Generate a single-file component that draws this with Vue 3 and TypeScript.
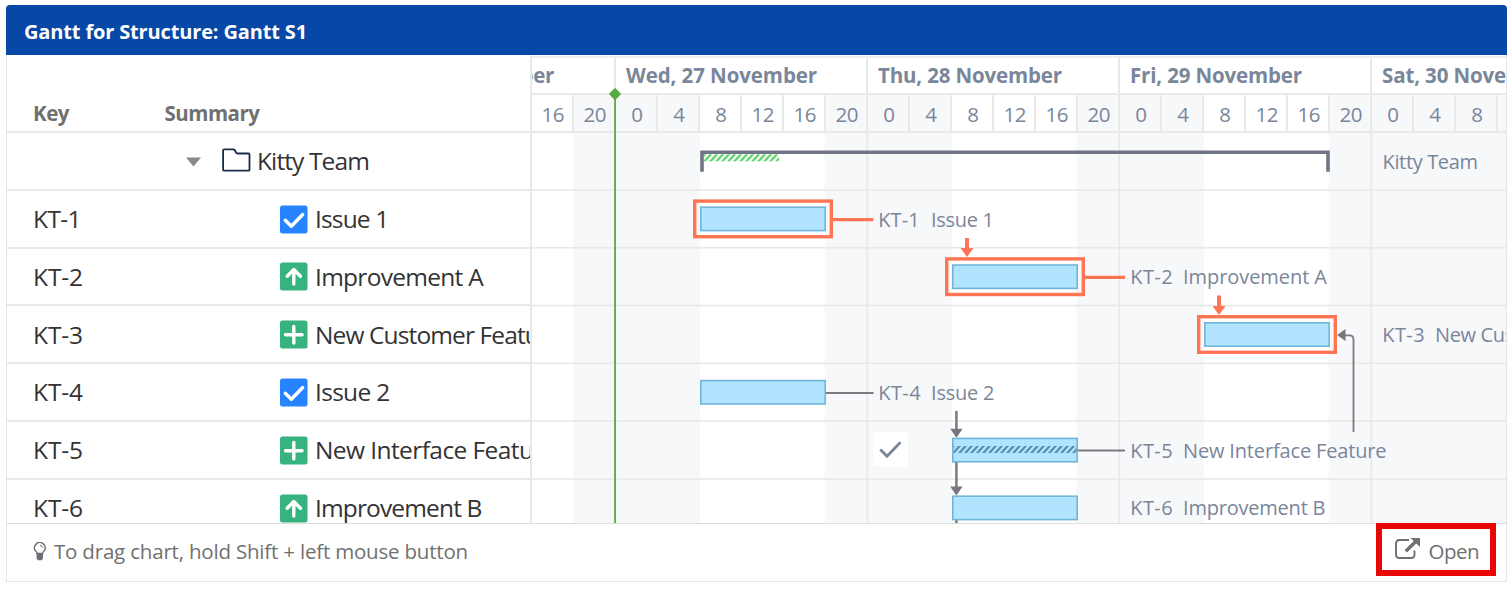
<script setup lang="ts">
interface Row {
  key: string
  summary: string
  width: number
  kind: 'folder' | 'task' | 'up' | 'plus'
}
interface Label {
  x: number
  y: number
  text: string
  width: number
}

// Spreads the letters so that a label takes exactly the given width
const vFit = {
  mounted(el: HTMLElement, binding: { value: number }) {
    const natural = el.getBoundingClientRect().width
    const count = (el.textContent ?? '').trim().length
    el.style.letterSpacing = `${(binding.value - natural) / count}px`
  },
}

const rows: Row[] = [
  { key: '', summary: 'Kitty Team', width: 112, kind: 'folder' },
  { key: 'KT-1', summary: 'Issue 1', width: 73.5, kind: 'task' },
  { key: 'KT-2', summary: 'Improvement A', width: 168, kind: 'up' },
  { key: 'KT-3', summary: 'New Customer Feature', width: 246, kind: 'plus' },
  { key: 'KT-4', summary: 'Issue 2', width: 74.5, kind: 'task' },
  { key: 'KT-5', summary: 'New Interface Feature', width: 241, kind: 'plus' },
  { key: 'KT-6', summary: 'Improvement B', width: 166.5, kind: 'up' },
]

const days = [
  { text: 'Tue, 26 November', width: 180 },
  { text: 'Wed, 27 November', width: 191 },
  { text: 'Thu, 28 November', width: 184 },
  { text: 'Fri, 29 November', width: 172 },
  { text: 'Sat, 30 November', width: 178 },
]
const hours: number[] = [16, 20, 0, 4, 8, 12, 16, 20, 0, 4, 8, 12, 16, 20, 0, 4, 8, 12, 16, 20, 0, 4, 8, 12]
const isOff = (i: number) => i >= 20 || [20, 0, 4].includes(hours[i])

// Chart coordinates: origin at the top left corner of the rows area
const work = [
  { x: 0, w: 41 },
  { x: 168, w: 124.7 },
  { x: 420, w: 124.7 },
  { x: 672, w: 124.7 },
]
const rowLines = [57, 114.8, 172.6, 230.4, 288.2, 346]
const dayLines = [83.2, 335.2, 587.2, 839.2]
const bars = [
  { x: 168, y: 73.4, hot: true },
  { x: 420, y: 131.2, hot: true },
  { x: 672, y: 189, hot: true },
  { x: 168, y: 246.8, hot: false },
  { x: 420, y: 304.6, hot: false },
  { x: 420, y: 362.4, hot: false },
]
const labels: Label[] = [
  { x: 850.5, y: 36, text: 'Kitty Team', width: 95.5 },
  { x: 346.2, y: 93.8, text: 'KT-1', width: 41.5 },
  { x: 399, y: 93.8, text: 'Issue 1', width: 63 },
  { x: 598.2, y: 151.3, text: 'KT-2', width: 42.5 },
  { x: 651, y: 151.3, text: 'Improvement A', width: 144 },
  { x: 850.2, y: 209, text: 'KT-3', width: 42.5 },
  { x: 903, y: 209, text: 'New Customer Feature', width: 208 },
  { x: 346.2, y: 267, text: 'KT-4', width: 42.5 },
  { x: 399, y: 267, text: 'Issue 2', width: 63.5 },
  { x: 598.2, y: 325, text: 'KT-5', width: 42.5 },
  { x: 651, y: 325, text: 'New Interface Feature', width: 203.5 },
  { x: 598.2, y: 382, text: 'KT-6', width: 42.5 },
  { x: 651, y: 382, text: 'Improvement B', width: 142.5 },
]
</script>

<template>
  <div class="page">
    <section class="gadget">
      <header class="title"><span v-fit="283">Gantt for Structure: Gantt S1</span></header>
      <div class="body">
        <div class="table">
          <div class="thead">
            <span class="kcol"><span v-fit="36" class="fit">Key</span></span>
            <span v-fit="95" class="fit">Summary</span>
          </div>
          <div class="rows">
            <div v-for="(r, i) in rows" :key="i" class="row">
              <span class="kcol"><span v-if="r.key" v-fit="r.key === 'KT-1' ? 48 : 50" class="fit">{{ r.key }}</span></span>
              <span class="icon" :class="{ folder: r.kind === 'folder' }">
                <svg v-if="r.kind === 'folder'" width="66" height="28" viewBox="0 0 66 28">
                  <path d="M0 10.500h15l-7.500 9z" fill="#8a8a8a" />
                  <path d="M38.100 2.300h9.200q1 0 1.500.900l1.400 2.500q.400.800 1.300.800h11q1 0 1 1v15.200q0 1-1 1h-24.400q-1 0-1-1v-19.400q0-1 1-1z" fill="none" stroke="#172b4d" stroke-width="1.800" />
                </svg>
                <svg v-else width="28" height="29" viewBox="0 0 28 29">
                  <rect x="0" y=".6" width="27.500" height="28" rx="2.500" :fill="r.kind === 'task' ? '#2684ff' : '#36b37e'" />
                  <g fill="none" stroke="#fff" stroke-width="3.400" stroke-linecap="round" stroke-linejoin="round">
                    <path v-if="r.kind === 'task'" d="M5.300 15.300l6 5.900L22.700 9.500" />
                    <path v-if="r.kind === 'up'" d="M13.800 22V8M7.200 14.200l6.600-6.700 6.600 6.700" />
                    <path v-if="r.kind === 'plus'" d="M13.800 6.400v16.600M5.500 14.700h16.600" />
                  </g>
                </svg>
              </span>
              <span v-fit="r.width" class="fit">{{ r.summary }}</span>
            </div>
          </div>
        </div>
        <div class="chart">
          <div class="days">
            <div v-for="d in days" :key="d.text" class="day"><span v-fit="d.width" class="fit">{{ d.text }}</span></div>
          </div>
          <div class="hours">
            <div v-for="(h, i) in hours" :key="i" class="hour" :class="{ off: isOff(i) }">{{ h }}</div>
          </div>
          <svg class="plot" width="974" height="390" viewBox="0 0 974 390">
            <defs>
              <pattern id="done" width="6" height="7" patternUnits="userSpaceOnUse" x="172.500" y="21.500">
                <path d="M-1 8L7-1M-7 8L1-1M5 8L13-1" stroke="#4bcb5c" stroke-width="2" />
              </pattern>
              <pattern id="spent" width="6" height="7" patternUnits="userSpaceOnUse" x="421.500" y="313">
                <path d="M-1 8L7-1M-7 8L1-1M5 8L13-1" stroke="#3d789b" stroke-width="1.700" />
              </pattern>
            </defs>
            <rect width="974" height="390" fill="#f7f8fa" />
            <rect v-for="w in work" :key="w.x" :x="w.x" y="0" :width="w.w" height="390" fill="#fff" />
            <rect v-for="y in rowLines" :key="y" x="0" :y="y - .9" width="974" height="1.700" fill="#e9e9ea" />
            <rect v-for="x in dayLines" :key="x" :x="x - .7" y="0" width="1.700" height="390" fill="#e8e8e9" />

            <path d="M170 38.700V19.300H796V38.700" fill="none" stroke="#6f7587" stroke-width="3.600" />
            <rect x="172" y="21.300" width="75" height="7" fill="url(#done)" />

            <g fill="none" stroke="#7a7b80" stroke-width="2">
              <path d="M294 260H341.500M546 317.600H593" />
              <path d="M813 202.300h4.500q4 0 4 4V299" stroke-width="1.800" />
              <path d="M424.400 278V298M424.400 320V355M424.400 386V390" stroke-width="2.500" />
            </g>
            <path d="M805 202l8.500-6v12z" fill="#77787d" />
            <g fill="none" stroke="#ff7452" stroke-width="3.400">
              <path d="M301 86.600H341.300M553 144.400H593" />
              <path d="M435 105V117M687 162.500V174.500" stroke-width="4" />
            </g>
            <path d="M428.500 115h13l-6.500 9zM680.500 173h13l-6.500 9z" fill="#ff7452" />

            <template v-for="(b, i) in bars" :key="i">
              <rect v-if="b.hot" :x="b.x - 5.300" :y="b.y - 5.300" width="136.600" height="35.600" fill="none" stroke="#ff7452" stroke-width="3.400" />
              <rect :x="b.x + .8" :y="b.y + .8" width="124.400" height="23.400" fill="#b0e4ff" stroke="#71b6da" stroke-width="1.600" />
            </template>
            <rect x="421.500" y="313" width="123" height="7" fill="url(#spent)" />
            <path d="M418.200 295.700h12.400l-6.200 9zM418.200 353.500h12.400l-6.200 9z" fill="#77787d" />

            <rect x="341" y="299" width="35" height="35" rx="3.500" fill="#fff" />
            <path d="M348.300 316.500l6.700 6.700 13.500-14" fill="none" stroke="#7a869a" stroke-width="2.800" />

            <text v-for="l in labels" :key="l.text + l.x + l.y" class="label" :x="l.x" :y="l.y" :textLength="l.width">{{ l.text }}</text>
          </svg>
          <svg class="now" width="14" height="436" viewBox="0 0 14 436">
            <rect x="6.100" y="6" width="1.900" height="430" fill="#5fae4e" />
            <path d="M7 .8l6.200 6.200L7 13.200.8 7z" fill="#57a944" />
          </svg>
        </div>
      </div>
      <footer class="foot">
        <div class="hint">
          <svg width="14" height="20" viewBox="0 0 14 20">
            <path d="M4 11.500Q3.700 10 2.400 8.800A5.300 5.300 0 1 1 11.200 8.800Q9.900 10 9.600 11.500z" fill="none" stroke="#6b6e73" stroke-width="1.400" />
            <path d="M3.600 12h6.400v4.400l-1.300 1.900h-3.800l-1.300-1.900z" fill="#6b6e73" />
            <path d="M7 3.400q2.300.2 2.600 2.300" fill="none" stroke="#6b6e73" />
          </svg>
          <span v-fit="414" class="fit">To drag chart, hold Shift + left mouse button</span>
        </div>
        <div class="open">
          <svg width="28" height="24" viewBox="0 0 28 24">
            <path d="M15 3H5.500Q2 3 2 6.500v11Q2 21 5.500 21H17Q20.500 21 20.500 17.500V13.500" fill="none" stroke="#707070" stroke-width="1.900" />
            <path d="M11.800 14.300L21.500 4.800" stroke="#707070" stroke-width="3.400" />
            <path d="M16.500 1H26v9z" fill="#707070" />
          </svg>
          <span v-fit="50.5" class="fit">Open</span>
        </div>
      </footer>
    </section>
  </div>
</template>

<style>
body {
  background: #fff;
}
</style>

<style scoped>
.page {
  height: 589px;
  box-sizing: border-box;
  padding: 5px 4px 0 6px;
  overflow: hidden;
  font-family: 'Open Sans', 'Noto Sans', sans-serif;
}
.fit {
  display: inline-block;
  white-space: pre;
}
.gadget {
  height: 577px;
  display: flex;
  flex-direction: column;
}
.title {
  height: 50px;
  flex: none;
  display: flex;
  align-items: center;
  padding: 2px 18px 0;
  box-sizing: border-box;
  border-radius: 4px 4px 0 0;
  background: #0747a6;
  color: #fff;
  font-size: 20px;
  font-weight: 700;
  white-space: pre;
}
.body {
  height: 468px;
  flex: none;
  display: flex;
  border-left: 1px solid #e6e6e6;
  border-right: 1px solid #e6e6e6;
}
.table {
  width: 525px;
  box-sizing: border-box;
  flex: none;
  overflow: hidden;
  border-right: 2px solid #e9e9e9;
}
.thead {
  height: 78px;
  box-sizing: border-box;
  border-bottom: 2px solid #e9e9ea;
  padding: 41px 0 0 26px;
  display: flex;
  font-size: 20.500px;
  font-weight: 700;
  line-height: 34px;
  color: #707070;
}
.kcol {
  width: 131.500px;
  flex: none;
}
.row {
  height: 57.800px;
  box-sizing: border-box;
  border-bottom: 2px solid #e9e9ea;
  padding: 0 0 .5px 26px;
  display: flex;
  align-items: center;
  font-size: 24.500px;
  color: #333;
}
.icon {
  margin: 1.500px 0 0 115.500px;
  width: 35px;
  flex: none;
  display: flex;
}
.icon.folder {
  margin: 0 0 0 21.500px;
  width: 71px;
}
.chart {
  position: relative;
  width: 974px;
  flex: none;
  overflow: hidden;
  padding-top: 1px;
  box-sizing: border-box;
}
.days {
  height: 39px;
  box-sizing: border-box;
  border-top: 2px solid #ededed;
  border-bottom: 2px solid #e9e9ea;
  display: flex;
  margin-left: -170px;
  font-size: 20.500px;
  font-weight: 700;
  line-height: 34px;
  color: #7a869a;
}
.day {
  width: 252px;
  flex: none;
  box-sizing: border-box;
  border-left: 2px solid #e9e9ea;
  padding-left: 10px;
}
.hours {
  height: 38px;
  box-sizing: border-box;
  border-bottom: 2px solid #e9e9ea;
  display: flex;
  margin-left: -2px;
  font-size: 20.500px;
  letter-spacing: -0.500px;
  line-height: 39px;
  color: #7a869a;
}
.hour {
  width: 42px;
  flex: none;
  box-sizing: border-box;
  border-left: 2px solid #e9e9ea;
  padding-left: 1.500px;
  text-align: center;
}
.hour.off {
  background: #f7f8fa;
}
.plot {
  display: block;
}
.label {
  font-size: 20px;
  fill: #7a869a;
}
.now {
  position: absolute;
  left: 76px;
  top: 32px;
}
.foot {
  height: 59px;
  box-sizing: border-box;
  border: 1px solid #e6e6e6;
  border-top-color: #dedede;
  display: flex;
  justify-content: space-between;
  font-size: 20.500px;
  color: #707070;
}
.hint {
  display: flex;
  align-items: center;
  gap: 7px;
  padding: 0 0 3px 26px;
}
.hint svg {
  margin-top: 2px;
}
.open {
  width: 119.500px;
  height: 53px;
  box-sizing: border-box;
  border: 6px solid #e80606;
  margin: -1px 10.500px 0 0;
  display: flex;
  align-items: center;
  padding: 2px 0 0 11.500px;
}
.open svg {
  margin: -4px 7px 0 0;
}
</style>
